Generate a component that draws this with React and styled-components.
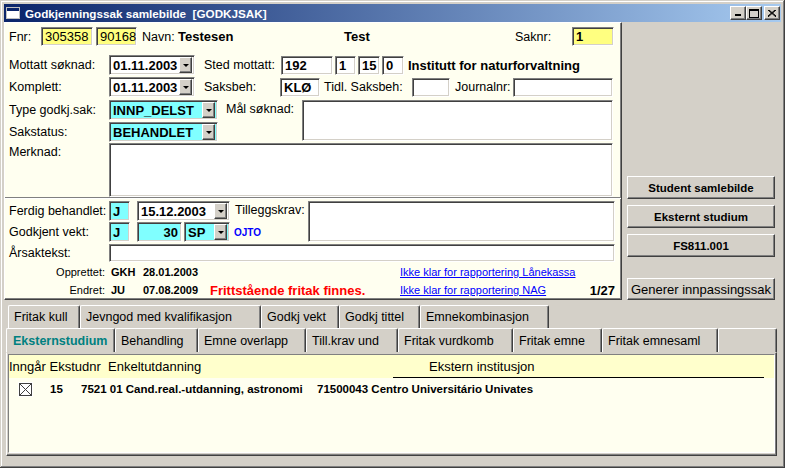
import React from "react";
import styled, { createGlobalStyle, css } from "styled-components";

const GlobalStyle = createGlobalStyle`
  html, body {
    margin: 0;
    padding: 0;
    background: #fff;
  }
  body {
    font-family: "Liberation Sans", Arial, sans-serif;
  }
  * {
    box-sizing: border-box;
  }
`;

const raised = css`
  border: 1px solid;
  border-color: #fff #404040 #404040 #fff;
  box-shadow: inset -1px -1px #808080;
`;

const sunken = css`
  border: 1px solid;
  border-color: #808080 #fff #fff #808080;
  box-shadow: inset 1px 1px #404040, inset -1px -1px #d4d0c8;
`;

const Window = styled.div`
  width: 785px;
  height: 468px;
  padding: 4px;
  background: #d4d0c8;
  box-shadow: inset -1px -1px #404040, inset 1px 1px #d4d0c8,
    inset -2px -2px #808080, inset 2px 2px #fff;
  display: flex;
  flex-direction: column;
  overflow: hidden;
`;

const TitleBar = styled.div`
  height: 18px;
  flex: none;
  display: flex;
  align-items: center;
  padding: 0 1px 0 1px;
  background: linear-gradient(to right, #0a246a, #a6caf0);
  color: #fff;
  font-weight: bold;
  font-size: 11.7px;
`;

const TitleText = styled.span`
  margin-left: 4px;
  white-space: pre;
`;

const WinButtons = styled.div`
  margin-left: auto;
  display: flex;
`;

const WinBtn = styled.div`
  ${raised}
  width: 16px;
  height: 14px;
  margin-left: ${(p) => p.$ml || 0}px;
  background: #d4d0c8;
  display: flex;
  align-items: center;
  justify-content: center;
`;

const Body = styled.div`
  display: flex;
  align-items: flex-start;
`;

const Panel = styled.div`
  ${raised}
  width: 618px;
  background: #fffff0;
  flex: none;
`;

const Section = styled.div`
  padding: ${(p) => p.$pt}px 6px 0 4px;
  ${(p) =>
    p.$divider &&
    css`
      border-top: 1px solid #808080;
      box-shadow: inset 0 1px #fff;
    `}
`;

const Row = styled.div`
  display: flex;
  align-items: ${(p) => (p.$top ? "flex-start" : "center")};
  height: ${(p) => (p.$h ? p.$h + "px" : "auto")};
  margin-bottom: ${(p) => p.$mb || 0}px;
`;

const Col = styled.div`
  width: ${(p) => p.$w}px;
  flex: none;
`;

const Label = styled.span`
  flex: none;
  width: ${(p) => (p.$w ? p.$w + "px" : "auto")};
  margin-left: ${(p) => p.$ml || 0}px;
  margin-top: ${(p) => (p.$top ? 2 : 0)}px;
  font-size: 12.5px;
  color: #000;
  white-space: nowrap;
  align-self: ${(p) => (p.$top ? "flex-start" : "center")};
`;

const Value = styled.span`
  flex: none;
  width: ${(p) => (p.$w ? p.$w + "px" : "auto")};
  margin-left: ${(p) => p.$ml || 0}px;
  font-size: 13px;
  font-weight: bold;
  white-space: nowrap;
`;

const Field = styled.div`
  ${sunken}
  flex: none;
  width: ${(p) => p.$w}px;
  height: ${(p) => p.$h || 19}px;
  margin-left: ${(p) => p.$ml || 0}px;
  background: ${(p) => p.$bg || "#fff"};
  display: flex;
  align-items: center;
  justify-content: ${(p) => (p.$right ? "flex-end" : "flex-start")};
  padding: 0 3px 0 3px;
  font-size: 13px;
  font-weight: ${(p) => (p.$normal ? "normal" : "bold")};
  color: #000;
  white-space: nowrap;
  overflow: hidden;
`;

const ComboBox = styled(Field)`
  height: 20px;
  padding-right: 2px;
`;

const DropBtn = styled.span`
  ${raised}
  margin-left: auto;
  width: 13px;
  height: 16px;
  flex: none;
  background: #d4d0c8;
  display: flex;
  align-items: center;
  justify-content: center;

  &::after {
    content: "";
    border-left: 3px solid transparent;
    border-right: 3px solid transparent;
    border-top: 3px solid #000;
  }
`;

const Tag = styled.span`
  flex: none;
  margin-left: ${(p) => p.$ml || 0}px;
  color: #0000ff;
  font-size: 10px;
  font-weight: bold;
`;

const InfoRow = styled.div`
  display: flex;
  align-items: center;
  height: 18px;
  font-size: 11px;
`;

const InfoLabel = styled.span`
  width: 96px;
  flex: none;
  text-align: right;
`;

const InfoValue = styled.span`
  width: ${(p) => p.$w}px;
  margin-left: ${(p) => p.$ml || 0}px;
  flex: none;
  font-weight: bold;
`;

const Alert = styled.span`
  width: 190px;
  flex: none;
  color: #ff0000;
  font-size: 13px;
  font-weight: bold;
  white-space: nowrap;
`;

const LinkText = styled.span`
  color: #0000ff;
  text-decoration: underline;
  white-space: nowrap;
`;

const Counter = styled.span`
  margin-left: auto;
  font-size: 13px;
  font-weight: bold;
`;

const SideCol = styled.div`
  margin-left: 5px;
  padding-top: 154px;
  width: 148px;
  display: flex;
  flex-direction: column;
`;

const SideButton = styled.div`
  ${raised}
  height: ${(p) => (p.$bold ? 23 : 22)}px;
  margin-bottom: ${(p) => p.$mb || 0}px;
  background: #d4d0c8;
  display: flex;
  align-items: center;
  justify-content: center;
  font-size: ${(p) => (p.$bold ? "11.5px" : "13px")};
  font-weight: ${(p) => (p.$bold ? "bold" : "normal")};
  white-space: nowrap;
`;

const Tabs = styled.div`
  margin-top: 5px;
  display: flex;
  flex-direction: column;
`;

const TabRow = styled.div`
  display: flex;
  height: ${(p) => p.$h}px;
  margin-left: ${(p) => p.$ml}px;
`;

const Tab = styled.div`
  width: ${(p) => p.$w}px;
  flex: none;
  background: #d4d0c8;
  border-top: 1px solid #fff;
  border-left: 1px solid #fff;
  border-right: 1px solid #404040;
  box-shadow: inset -1px 0 #808080;
  border-radius: 2px 2px 0 0;
  display: flex;
  align-items: center;
  padding-left: ${(p) => (p.$active ? 6 : 5)}px;
  font-size: 12.5px;
  white-space: nowrap;
  color: ${(p) => (p.$active ? "#008080" : "#000")};
  font-weight: ${(p) => (p.$active ? "bold" : "normal")};
`;

const TabPanel = styled.div`
  ${raised}
  border-top-color: #d4d0c8;
  margin-left: 2px;
  width: 771px;
  height: 104px;
  padding: 1px 1px 2px 1px;
  display: flex;
`;

const ListBox = styled.div`
  flex: 1;
  border: 1px solid;
  border-color: #808080 #fff #fff #808080;
  background: #fffff0;
`;

const ListHeader = styled.div`
  height: 23px;
  background: #ffffcc;
  display: flex;
  align-items: center;
  font-size: 13px;
  padding-right: 10px;
`;

const HeaderCell = styled.span`
  width: ${(p) => (p.$w ? p.$w + "px" : "auto")};
  flex: ${(p) => (p.$w ? "none" : 1)};
  padding-left: ${(p) => p.$pl || 0}px;
  white-space: pre;
  align-self: stretch;
  display: flex;
  align-items: center;
  ${(p) =>
    p.$line &&
    css`
      border-bottom: 1px solid #000;
    `}
`;

const ListRow = styled.div`
  display: flex;
  align-items: center;
  height: 20px;
  margin-top: 1px;
  font-size: 11.5px;
  font-weight: bold;
`;

const Cell = styled.span`
  width: ${(p) => (p.$w ? p.$w + "px" : "auto")};
  padding-left: ${(p) => p.$pl || 0}px;
  flex: none;
  white-space: nowrap;
  display: flex;
  align-items: center;
`;

const CheckMark = styled.span`
  width: 15px;
  height: 15px;
  background: #fff;
  display: flex;
  align-items: center;
  justify-content: center;
`;

const Combo = ({ children, ...rest }) => (
  <ComboBox {...rest}>
    <span>{children}</span>
    <DropBtn />
  </ComboBox>
);

const WindowIcon = () => (
  <svg width="16" height="16" viewBox="0 0 16 16">
    <rect x="1.5" y="2.5" width="13" height="11" fill="#fff" stroke="#c0c0c0" />
    <rect x="2" y="3" width="12" height="3" fill="#0a246a" />
  </svg>
);

const tabsBack = [
  ["Fritak kull", 72],
  ["Jevngod med kvalifikasjon", 181],
  ["Godkj vekt", 78],
  ["Godkj tittel", 81],
  ["Emnekombinasjon", 129],
];

const tabsFront = [
  ["Eksternstudium", 109],
  ["Behandling", 83],
  ["Emne overlapp", 108],
  ["Till.krav und", 92],
  ["Fritak vurdkomb", 115],
  ["Fritak emne", 89],
  ["Fritak emnesaml", 116],
  ["", 59],
];

const App = () => {
  return (
    <>
      <GlobalStyle />
      <Window>
        <TitleBar>
          <WindowIcon />
          <TitleText>Godkjenningssak samlebilde  [GODKJSAK]</TitleText>
          <WinButtons>
            <WinBtn>
              <svg width="8" height="8" viewBox="0 0 8 8">
                <rect x="1" y="5" width="6" height="2" fill="#000" />
              </svg>
            </WinBtn>
            <WinBtn>
              <svg width="10" height="9" viewBox="0 0 10 9">
                <rect x="0.5" y="0.5" width="9" height="8" fill="none" stroke="#000" />
                <rect x="0" y="1" width="10" height="1" fill="#000" />
              </svg>
            </WinBtn>
            <WinBtn $ml={2}>
              <svg width="8" height="7" viewBox="0 0 8 7">
                <path d="M0 0 L8 7 M1 0 L8 6 M8 0 L0 7 M7 0 L0 6" stroke="#000" strokeWidth="1" />
              </svg>
            </WinBtn>
          </WinButtons>
        </TitleBar>

        <Body>
          <Panel>
            <Section $pt={4}>
              <Row $h={19} $mb={9}>
                <Label $w={32}>Fnr:</Label>
                <Field $w={52} $bg="#ffff80" $normal>305358</Field>
                <Field $w={41} $ml={3} $bg="#ffff80" $normal>90168</Field>
                <Label $w={36} $ml={5}>Navn:</Label>
                <Value $w={166}>Testesen</Value>
                <Value $w={171}>Test</Value>
                <Label $w={57}>Saknr:</Label>
                <Field $w={42} $bg="#ffff80">1</Field>
              </Row>
              <Row $h={20} $mb={2}>
                <Label $w={100}>Mottatt søknad:</Label>
                <Combo $w={86}>01.11.2003</Combo>
                <Label $w={77} $ml={9}>Sted mottatt:</Label>
                <Field $w={52}>192</Field>
                <Field $w={21} $ml={2}>1</Field>
                <Field $w={22} $ml={2}>15</Field>
                <Field $w={22} $ml={2}>0</Field>
                <Value $ml={4}>Institutt for naturforvaltning</Value>
              </Row>
              <Row $h={20} $mb={3}>
                <Label $w={100}>Komplett:</Label>
                <Combo $w={86}>01.11.2003</Combo>
                <Label $w={76} $ml={9}>Saksbeh:</Label>
                <Field $w={40}>KLØ</Field>
                <Label $w={88} $ml={4}>Tidl. Saksbeh:</Label>
                <Field $w={38} />
                <Label $w={58} $ml={5}>Journalnr:</Label>
                <Field $w={100} />
              </Row>
              <Row $top $mb={1}>
                <Col $w={209}>
                  <Row $h={20} $mb={2}>
                    <Label $w={100}>Type godkj.sak:</Label>
                    <Combo $w={109} $bg="#80ffff">INNP_DELST</Combo>
                  </Row>
                  <Row $h={20}>
                    <Label $w={100}>Sakstatus:</Label>
                    <Combo $w={109} $bg="#80ffff">BEHANDLET</Combo>
                  </Row>
                </Col>
                <Label $w={76} $ml={8} $top>Mål søknad:</Label>
                <Field $w={311} $h={41} />
              </Row>
              <Row $top>
                <Label $w={100} $top>Merknad:</Label>
                <Field $w={504} $h={54} />
              </Row>
            </Section>

            <Section $divider $pt={3}>
              <Row $top $mb={2}>
                <Col $w={221}>
                  <Row $h={20} $mb={1}>
                    <Label $w={100}>Ferdig behandlet:</Label>
                    <Field $w={21} $h={20} $bg="#80ffff">J</Field>
                    <Combo $w={93} $ml={7}>15.12.2003</Combo>
                  </Row>
                  <Row $h={20}>
                    <Label $w={100}>Godkjent vekt:</Label>
                    <Field $w={21} $h={20} $bg="#80ffff">J</Field>
                    <Field $w={45} $h={20} $ml={7} $bg="#80ffff" $right>30</Field>
                    <Combo $w={46} $ml={2} $bg="#80ffff">SP</Combo>
                    <Tag $ml={4}>OJTO</Tag>
                  </Row>
                </Col>
                <Label $w={73} $ml={5} $top>Tilleggskrav:</Label>
                <Field $w={307} $h={41} />
              </Row>
              <Row $h={18} $mb={1}>
                <Label $w={100}>Årsaktekst:</Label>
                <Field $w={506} $h={18} />
              </Row>
              <InfoRow>
                <InfoLabel>Opprettet:</InfoLabel>
                <InfoValue $w={32} $ml={6}>GKH</InfoValue>
                <InfoValue $w={67}>28.01.2003</InfoValue>
                <Alert />
                <LinkText>Ikke klar for rapportering Lånekassa</LinkText>
              </InfoRow>
              <InfoRow>
                <InfoLabel>Endret:</InfoLabel>
                <InfoValue $w={32} $ml={6}>JU</InfoValue>
                <InfoValue $w={67}>07.08.2009</InfoValue>
                <Alert>Frittstående fritak finnes.</Alert>
                <LinkText>Ikke klar for rapportering NAG</LinkText>
                <Counter>1/27</Counter>
              </InfoRow>
            </Section>
          </Panel>

          <SideCol>
            <SideButton $bold $mb={6}>Student samlebilde</SideButton>
            <SideButton $bold $mb={6}>Eksternt studium</SideButton>
            <SideButton $bold $mb={21}>FS811.001</SideButton>
            <SideButton>Generer innpassingssak</SideButton>
          </SideCol>
        </Body>

        <Tabs>
          <TabRow $h={23} $ml={4}>
            {tabsBack.map(([name, w]) => (
              <Tab key={name} $w={w}>{name}</Tab>
            ))}
          </TabRow>
          <TabRow $h={24} $ml={2}>
            {tabsFront.map(([name, w], i) => (
              <Tab key={name + i} $w={w} $active={i === 0}>{name}</Tab>
            ))}
          </TabRow>
          <TabPanel>
            <ListBox>
              <ListHeader>
                <HeaderCell $w={384}>Inngår Ekstudnr  Enkeltutdanning</HeaderCell>
                <HeaderCell $pl={36} $line>Ekstern institusjon</HeaderCell>
              </ListHeader>
              <ListRow>
                <Cell $w={41} $pl={9}>
                  <CheckMark>
                    <svg width="13" height="13" viewBox="0 0 13 13">
                      <rect x="0.5" y="0.5" width="12" height="12" fill="none" stroke="#404040" />
                      <path d="M1 1 L12 12 M12 1 L1 12" stroke="#404040" />
                    </svg>
                  </CheckMark>
                </Cell>
                <Cell $w={31}>15</Cell>
                <Cell $w={236}>7521 01 Cand.real.-utdanning, astronomi</Cell>
                <Cell>71500043 Centro Universitário Univates</Cell>
              </ListRow>
            </ListBox>
          </TabPanel>
        </Tabs>
      </Window>
    </>
  );
};

export default App;
